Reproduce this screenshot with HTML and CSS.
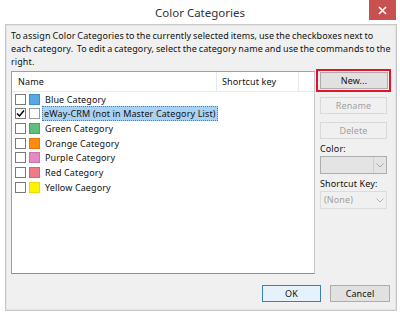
FILE: index.html
```html
<!DOCTYPE html>
<html lang="en">
<head>
  <meta charset="UTF-8" />
  <title>Color Categories</title>
  <link rel="stylesheet" href="styles.css">
</head>
<body>

  <div class="window">
    <div class="titlebar">
      <span></span>
      <span class="title">Color Categories</span>
      <a class="close">
        <svg width="9" height="9" viewBox="0 0 9 9"><path d="M1 1 L8 8 M8 1 L1 8" stroke="#fff" stroke-width="1.6"/></svg>
      </a>
    </div>

    <div class="client">
      <p class="intro">To assign Color Categories to the currently selected items, use the checkboxes next to<br>each category.&nbsp; To edit a category, select the category name and use the commands to the<br>right.</p>

      <div class="main">
        <div class="list">
          <div class="list-head">
            <div class="col-name">Name</div>
            <div class="col-key">Shortcut key</div>
            <div class="col-rest"></div>
          </div>

          <div class="row">
            <span class="check"></span>
            <span class="swatch blue"></span>
            <span class="label">Blue Category</span>
          </div>
          <div class="row">
            <span class="check">
              <svg width="9" height="9" viewBox="0 0 9 9"><path d="M1 4.5 L3.5 7 L8 1.5" fill="none" stroke="#000" stroke-width="1.5"/></svg>
            </span>
            <span class="swatch none"></span>
            <span class="label selected">eWay-CRM (not in Master Category List)</span>
          </div>
          <div class="row">
            <span class="check"></span>
            <span class="swatch green"></span>
            <span class="label">Green Category</span>
          </div>
          <div class="row">
            <span class="check"></span>
            <span class="swatch orange"></span>
            <span class="label">Orange Category</span>
          </div>
          <div class="row">
            <span class="check"></span>
            <span class="swatch purple"></span>
            <span class="label">Purple Category</span>
          </div>
          <div class="row">
            <span class="check"></span>
            <span class="swatch red"></span>
            <span class="label">Red Category</span>
          </div>
          <div class="row">
            <span class="check"></span>
            <span class="swatch yellow"></span>
            <span class="label">Yellow Caegory</span>
          </div>
        </div>

        <div class="side">
          <div class="highlight">
            <a class="btn">New...</a>
          </div>
          <a class="btn disabled rename">Rename</a>
          <a class="btn disabled delete">Delete</a>

          <div class="field-label color-label">Color:</div>
          <div class="combo dark">
            <span class="combo-value"></span>
            <span class="combo-arrow">
              <svg width="8" height="5" viewBox="0 0 8 5"><path d="M0.5 0.5 L4 4 L7.5 0.5" fill="none" stroke="#a8a8a8" stroke-width="1"/></svg>
            </span>
          </div>

          <div class="field-label key-label">Shortcut Key:</div>
          <div class="combo light">
            <span class="combo-value">(None)</span>
            <span class="combo-arrow">
              <svg width="8" height="5" viewBox="0 0 8 5"><path d="M0.5 0.5 L4 4 L7.5 0.5" fill="none" stroke="#b4b4b4" stroke-width="1"/></svg>
            </span>
          </div>
        </div>
      </div>

      <div class="footer">
        <a class="btn ok">OK</a>
        <a class="btn cancel">Cancel</a>
      </div>
    </div>
  </div>

</body>
</html>
```

FILE: styles.css
```css
body {
  margin: 0;
  background-color: #ffffff;
  font-family: "Noto Sans", "Open Sans", sans-serif;
  font-size: 9px;
  letter-spacing: 0.12px;
  color: #111;
}

.window {
  width: 400px;
  height: 315px;
  display: flex;
  flex-direction: column;
}

.titlebar {
  height: 24px;
  display: grid;
  grid-template-columns: 1fr auto 1fr;
  align-items: start;
}

.title {
  font-size: 11.5px;
  letter-spacing: 0;
  color: #333;
  line-height: 26px;
}

.close {
  justify-self: end;
  margin-right: 4px;
  width: 27px;
  height: 20px;
  background-color: #c75050;
  display: flex;
  align-items: center;
  justify-content: center;
}

.client {
  margin-left: 5px;
  width: 379px;
  height: 285px;
  border: 1px solid #c8c8c8;
  background-color: #f0f0f0;
  box-shadow: inset 0 0 0 1px #e4e4e4;
  padding: 0 6px 0 5px;
}

.intro {
  margin: 4px 0 0 0;
  line-height: 13px;
  white-space: nowrap;
  letter-spacing: 0.1px;
  word-spacing: -0.6px;
}

.main {
  display: flex;
  margin-top: 3px;
}

.list {
  width: 302px;
  height: 201px;
  border: 1px solid #a0a0a0;
  border-right-color: #c8c8c8;
  border-bottom-color: #8f8f8f;
  background-color: #fff;
}

.list-head {
  display: flex;
  height: 19px;
  border-bottom: 1px solid #e6ebf2;
  line-height: 19px;
}

.col-name {
  width: 198px;
  padding-left: 6px;
  border-right: 1px solid #e3e9f1;
}

.col-key {
  width: 76px;
  padding-left: 5px;
  border-right: 1px solid #e3e9f1;
}

.row {
  height: 14.67px;
  display: flex;
  align-items: center;
  padding-left: 3px;
}

.check {
  width: 9px;
  height: 9px;
  border: 1px solid #7a7a7a;
  background-color: #fff;
  display: flex;
  align-items: center;
  justify-content: center;
}

.swatch {
  width: 9px;
  height: 9px;
  margin-left: 3px;
  border: 1px solid transparent;
}

.swatch.blue { background-color: #56a8e4; border-color: #3c8fcc; }
.swatch.none { background-color: #fff; border-color: #9a9a9a; }
.swatch.green { background-color: #5fbf78; border-color: #4aa762; }
.swatch.orange { background-color: #ff8a12; border-color: #ea7700; }
.swatch.purple { background-color: #e58ac0; border-color: #cf72a9; }
.swatch.red { background-color: #ef7b84; border-color: #db636d; }
.swatch.yellow { background-color: #fff200; border-color: #eadc00; }

.label {
  margin-left: 4px;
  padding: 0 1px;
  line-height: 13px;
  white-space: nowrap;
}

.label.selected {
  margin-left: 2px;
  background-color: #a9d1f3;
  border: 1px dotted #4b7fb0;
}

.side {
  width: 69px;
  margin-left: 5px;
  margin-top: -2px;
  display: flex;
  flex-direction: column;
}

.highlight {
  border: 2px solid #e3132a;
  padding: 1px 1px 1px 2px;
  margin-left: -4px;
  width: 68px;
}

.btn {
  display: flex;
  align-items: center;
  justify-content: center;
  height: 15px;
  border: 1px solid #adadad;
  background-color: #e1e1e1;
  color: #111;
  text-decoration: none;
  cursor: pointer;
}

.btn.disabled {
  border-color: #d9d9d9;
  background-color: #f0f0f0;
  color: #a0a0a0;
  width: 65px;
}

.rename {
  margin-top: 5px;
}

.delete {
  margin-top: 8px;
}

.field-label {
  line-height: 13px;
}

.color-label {
  margin-top: 3px;
}

.key-label {
  margin-top: 3px;
}

.combo {
  display: flex;
  width: 65px;
  height: 16px;
  border: 1px solid #adadad;
  background-color: #e4e4e4;
  margin-top: 1px;
}

.combo.light {
  border-color: #dcdcdc;
  background-color: #f0f0f0;
  color: #a0a0a0;
}

.combo-value {
  flex: 1;
  padding-left: 3px;
  line-height: 16px;
}

.combo-arrow {
  width: 12px;
  display: flex;
  align-items: center;
  justify-content: center;
}

.combo.dark .combo-arrow {
  border-left: 1px solid #cfcfcf;
}

.footer {
  display: flex;
  justify-content: flex-end;
  gap: 9px;
  margin-top: 11px;
}

.ok {
  width: 57px;
  border-color: #3c7fb1;
  background-color: #e5f1fb;
}

.cancel {
  width: 58px;
}
```
